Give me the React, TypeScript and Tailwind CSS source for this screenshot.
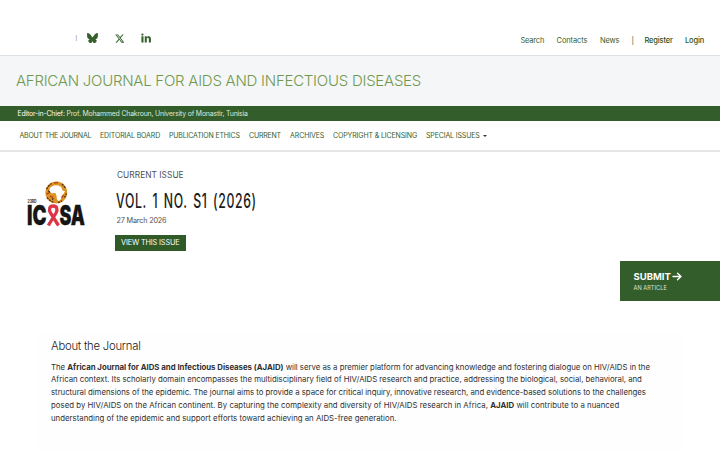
import React from 'react';

const navItems = [
  { label: 'ABOUT THE JOURNAL', className: 'w-[80.5px] tracking-[-0.22px]' },
  { label: 'EDITORIAL BOARD', className: 'w-[69px] tracking-[-0.13px]' },
  { label: 'PUBLICATION ETHICS', className: 'w-[80px] tracking-[-0.16px]' },
  { label: 'CURRENT', className: 'w-[41px] tracking-[-0.2px]' },
  { label: 'ARCHIVES', className: 'w-[43px] tracking-[-0.1px]' },
  { label: 'COPYRIGHT & LICENSING', className: 'w-[93px] tracking-[-0.13px]' },
  { label: 'SPECIAL ISSUES', className: 'w-[56.5px] tracking-[-0.15px]' },
];

const TopBar: React.FC = () => (
  <div className="flex h-[56px] items-start border-b border-[#dce1e5] text-[#35602b]">
    <div className="flex items-center pt-[33px] pl-[75.5px]">
      <span className="w-[11.5px] text-[5px] leading-none text-[#555]">|</span>
      <svg className="h-[10px] w-[11px]" viewBox="0 0 24 22" fill="currentColor">
        <path d="M5.2 1.5C8 3.6 11 7.800 12 10c1-2.200 4-6.400 6.800-8.500C20.800 0 24-1.200 24 2.600c0 .8-.4 6.400-.7 7.300-.9 3.200-4.200 4-7.100 3.500 5.100.9 6.400 3.800 3.600 6.700-5.300 5.500-7.600-1.400-7.800-3.800-.2 2.400-2.500 9.300-7.800 3.800-2.800-2.900-1.500-5.800 3.600-6.700-2.900.5-6.200-.3-7.100-3.500C.4 9 0 3.400 0 2.600 0-1.200 3.200 0 5.200 1.500Z" />
      </svg>
      <svg className="ml-[16.5px] h-[9px] w-[9.5px]" viewBox="0 0 24 24" fill="currentColor">
        <path d="M18.900 1h3.700l-8 9.200L24 23h-7.400l-5.800-7.600L4.200 23H.5l8.600-9.900L0 1h7.600l5.200 7zM17.600 20.800h2L6.500 3.100H4.300z" />
      </svg>
      <svg className="ml-[17px] h-[10px] w-[10px]" viewBox="0 0 24 24" fill="currentColor">
        <path d="M1 8h5v15H1zM3.500 1a2.700 2.700 0 1 1 0 5.400 2.700 2.700 0 0 1 0-5.400zM9 8h4.700v2.100c.8-1.400 2.400-2.500 4.700-2.500 4.500 0 5.400 2.900 5.400 6.900V23h-5v-7.400c0-1.900-.1-4-2.500-4s-2.400 2-2.400 4V23H9z" />
      </svg>
    </div>
    <div className="ml-auto flex pt-[35px] pr-[15px] text-[7.5px] leading-[11px] whitespace-nowrap">
      <a className="w-[36px] tracking-[-0.2px]">Search</a>
      <a className="w-[43.5px] tracking-[-0.1px]">Contacts</a>
      <a className="w-[31.5px] tracking-[-0.2px]">News</a>
      <span className="w-[13px]">|</span>
      <a className="w-[40.5px] font-medium tracking-[-0.15px] text-[#2c5224]">Register</a>
      <a className="w-[20px] font-medium tracking-[-0.15px] text-[#2c5224]">Login</a>
    </div>
  </div>
);

const IcasaLogo: React.FC = () => (
  <svg className="h-[48px] w-[60px] overflow-visible" viewBox="0 0 60 48">
    <circle cx="29.3" cy="11.5" r="10.9" fill="#dc9525" />
    <path d="M19.500 8l2-3 3-2.500M20 16.500l3 3 4 2M31 21.500l4-1.500M37.500 16.500l2-4M35 3l3.500 4" fill="none" stroke="#5a2b14" strokeWidth="1.400" strokeDasharray="2 1" />
    <path d="M27 2l4-.5M22 12l-2.500 1M23 15l3 1.500M34.500 17l2-3" fill="none" stroke="#bd4a1c" strokeWidth="1.500" />
    <path d="M21.500 9.500l1.500 2M25 18.500l1.500-1" fill="none" stroke="#3c2414" strokeWidth="1.300" />
    <path d="M24 6l3.500-1.800 4 .3 2.700 1.500 1.300 3.500 2.500 .7-1.300 2.300-2.200 2.500-.5 3-2.300 2.300-1.800-2-.5-4-1-2.300-4 .3-2-2.500.3-2.500z" fill="#fff" />
    <text x="0.500" y="22" fontFamily="Inter, sans-serif" fontSize="4.500" fontWeight="800" textLength="9" lengthAdjust="spacingAndGlyphs" fill="#444">23RD</text>
    <g fontFamily="Inter, sans-serif" fontWeight="900" fontSize="27" fill="#151515" stroke="#151515" strokeWidth=".3">
      <text x="0" y="44" textLength="19.500" lengthAdjust="spacingAndGlyphs">IC</text>
      <text x="32.500" y="44" textLength="25.500" lengthAdjust="spacingAndGlyphs">SA</text>
    </g>
    <path d="M21.300 44.500L29 32c2-3.500 1-7-2.800-7s-4.700 3.500-2.700 7L31.500 44.500" fill="none" stroke="#fff" strokeWidth="5" />
    <path d="M21.300 44.500L29 32c2-3.500 1-7-2.800-7s-4.700 3.500-2.700 7L31.500 44.500" fill="none" stroke="#dc3547" strokeWidth="3.300" />
  </svg>
);

const CurrentIssue: React.FC = () => (
  <section className="flex h-[109px] pl-[26.5px]">
    <div className="w-[88.5px] pt-[29px]">
      <IcasaLogo />
    </div>
    <div className="flex flex-col items-start whitespace-nowrap">
      <p className="mt-[18.5px] ml-[2px] text-[8.3px] leading-[11px] tracking-[0.06px] text-[#505050]">CURRENT ISSUE</p>
      <h2 className="mt-[7px] ml-[1px] h-[26px] w-[140px] origin-left scale-x-[0.63] text-[19.5px] leading-[26px] font-medium tracking-[1px] [word-spacing:2.8px] text-[#1c1c1c]">
        VOL. 1 NO. S1 (2026)
      </h2>
      <p className="mt-[0.5px] ml-[1.5px] text-[7.3px] leading-[11px] tracking-[-0.2px] text-[#505050]">27 March 2026</p>
      <a className="mt-[9px] h-[16px] w-[71px] bg-[#315a29] pl-[6px] text-[7.3px] leading-[16px] tracking-[-0.14px] text-white">VIEW THIS ISSUE</a>
    </div>
  </section>
);

const AboutJournal: React.FC = () => (
  <section className="mt-[31px] ml-[37px] h-[119px] w-[646px] bg-[#fefefe] px-[14px] pt-[6px] whitespace-nowrap">
    <h3 className="text-[11.3px] leading-[16px] font-light tracking-[-0.23px] text-[#222]">About the Journal</h3>
    <div className="mt-[7px] text-[7.8px] leading-[12.75px] text-[#303030]">
      <p className="tracking-[-0.01px]">
        The <b>African Journal for AIDS and Infectious Diseases (AJAID)</b> will serve as a premier platform for advancing knowledge and fostering dialogue on HIV/AIDS in the
      </p>
      <p className="tracking-[-0.02px]">African context. Its scholarly domain encompasses the multidisciplinary field of HIV/AIDS research and practice, addressing the biological, social, behavioral, and</p>
      <p className="tracking-[-0.02px]">structural dimensions of the epidemic. The journal aims to provide a space for critical inquiry, innovative research, and evidence-based solutions to the challenges</p>
      <p className="tracking-[0.03px]">
        posed by HIV/AIDS on the African continent. By capturing the complexity and diversity of HIV/AIDS research in Africa, <b>AJAID</b> will contribute to a nuanced
      </p>
      <p className="tracking-[0.01px]">understanding of the epidemic and support efforts toward achieving an AIDS-free generation.</p>
    </div>
  </section>
);

export default function App() {
  return (
    <div className="h-[450px] w-[720px] overflow-hidden bg-white font-['Inter',sans-serif]">
      <TopBar />
      <header className="h-[50px] bg-[#f4f6f8] pl-[16px]">
        <h1 className="pt-[14.5px] text-[15px] leading-[20px] font-light tracking-[-0.25px] whitespace-nowrap text-[#71984f]">
          AFRICAN JOURNAL FOR AIDS AND INFECTIOUS DISEASES
        </h1>
      </header>
      <div className="h-[15px] bg-[#335d2a] pl-[17.5px] text-[6.9px] leading-[15px] tracking-[-0.18px] whitespace-nowrap text-[#dfe8dc]">
        <span className="text-white">Editor-in-Chief:</span> Prof. Mohammed Chakroun, University of Monastir, Tunisia
      </div>
      <nav className="flex h-[30.5px] border-b-2 border-[#e6e6e6] pl-[19.5px] text-[7px] leading-[29.5px] whitespace-nowrap text-[#35602b]">
        {navItems.map((item) => (
          <a key={item.label} className={item.className}>{item.label}</a>
        ))}
        <span className="mt-[14px] h-0 w-0 border-x-2 border-t-2 border-x-transparent border-t-[#333]" />
      </nav>
      <CurrentIssue />
      <div className="ml-auto flex h-[40px] w-[100px] flex-col bg-[#335d2a] pl-[13.5px] text-white">
        <div className="flex items-center gap-[2px] pt-[9px] text-[9.5px] leading-[13px] font-bold">
          <span className="w-[36.5px]">SUBMIT</span>
          <svg className="h-[9px] w-[10px]" viewBox="0 0 10 9" fill="none" stroke="currentColor" strokeWidth="1.400" strokeLinecap="round" strokeLinejoin="round">
            <path d="M1 4.500h8M5.500 1.200L9 4.500 5.500 7.800" />
          </svg>
        </div>
        <span className="text-[5.6px] leading-[10px] tracking-[0.05px] text-[#dce6d9]">AN ARTICLE</span>
      </div>
      <AboutJournal />
    </div>
  );
}
